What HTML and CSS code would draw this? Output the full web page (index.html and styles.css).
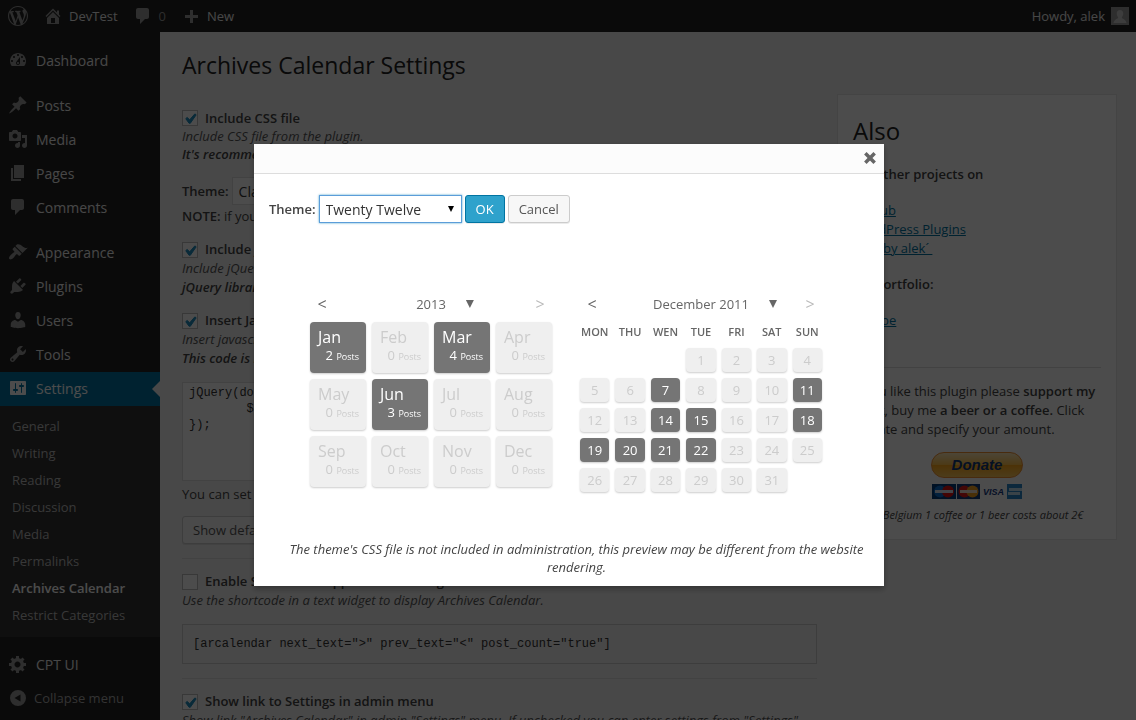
FILE: index.html
```html
<!DOCTYPE html>
<html lang="en">
<head>
<meta charset="utf-8">
<title>Archives Calendar Settings</title>
<link rel="stylesheet" href="styles.css">
</head>
<body class="modal-open">

<header class="adminbar">
  <a class="bar-item" href="#" aria-label="WordPress"><svg class="icon" viewBox="0 0 20 20"><path d="M20 10c0-5.51-4.49-10-10-10C4.48 0 0 4.49 0 10c0 5.52 4.48 10 10 10 5.51 0 10-4.48 10-10zM7.78 15.37L4.37 6.22c.55-.02 1.17-.08 1.17-.08.5-.06.44-1.13-.06-1.11 0 0-1.45.11-2.37.11-.18 0-.37 0-.58-.01C4.12 2.69 6.87 1.11 10 1.11c2.33 0 4.45.87 6.05 2.34-.68-.11-1.65.39-1.65 1.58 0 .74.45 1.36.9 2.1.35.61.55 1.36.55 2.46 0 1.49-1.4 5-1.4 5l-3.03-8.37c.54-.02.82-.17.82-.17.5-.05.44-1.25-.06-1.22 0 0-1.44.12-2.38.12-.87 0-2.33-.12-2.33-.12-.5-.03-.56 1.2-.06 1.22l.92.08 1.26 3.41zM17.41 10c.24-.64.74-1.87.43-4.25.7 1.29 1.05 2.71 1.05 4.25 0 3.29-1.73 6.24-4.4 7.78.97-2.59 1.94-5.2 2.92-7.78zM6.1 18.09C3.12 16.65 1.11 13.53 1.11 10c0-1.3.23-2.48.72-3.59C3.25 10.3 4.67 14.2 6.1 18.09zm4.03-6.63l2.58 6.98c-.86.29-1.76.45-2.71.45-.79 0-1.57-.11-2.29-.33.81-2.38 1.62-4.74 2.42-7.1z"/></svg></a>
  <a class="bar-item" href="#"><svg class="icon" viewBox="0 0 20 20"><path d="M16 8.5l1.53 1.53-1.06 1.06L10 4.6l-6.47 6.49-1.06-1.06L10 2.5l4 4v-2h2v4zm-6-2.46l6 5.99V18H4v-5.97zM12 17v-5H8v5h4z"/></svg><span>DevTest</span></a>
  <a class="bar-item bar-count" href="#"><svg class="icon" viewBox="0 0 20 20"><path d="M5 2h9c1.1 0 2 .9 2 2v7c0 1.1-.9 2-2 2h-2l-5 5v-5H5c-1.1 0-2-.9-2-2V4c0-1.1.9-2 2-2z"/></svg><span>0</span></a>
  <a class="bar-item" href="#"><svg class="icon" viewBox="0 -2 20 20"><path d="M17 7v3h-5v5H9v-5H4V7h5V2h3v5h5z"/></svg><span>New</span></a>
  <a class="bar-item bar-user" href="#"><span>Howdy, alek</span><svg class="avatar" viewBox="0 0 18 18"><rect class="avatar-bg" width="18" height="18"/><path class="avatar-fg" d="M9 3c2 0 3.300 1.500 3.300 3.500S11 10 10.800 10.500c.2 1.500 4.200 1.500 4.700 5.500h-13c.5-4 4.500-4 4.700-5.500C7 10 5.700 8.500 5.700 6.500S7 3 9 3z"/></svg></a>
</header>

<div class="layout">
  <nav class="sidebar">
    <ul class="menu">
      <li><a class="menu-link" href="#"><svg class="icon" viewBox="0 0 20 20"><path fill-rule="evenodd" d="M3.76 16h12.48c1.1-1.37 1.76-3.11 1.76-5 0-4.420-3.58-8-8-8s-8 3.580-8 8c0 1.890.66 3.630 1.760 5zM10 4c.55 0 1 .45 1 1s-.45 1-1 1-1-.45-1-1 .45-1 1-1zM6 6c.55 0 1 .45 1 1s-.45 1-1 1-1-.45-1-1 .45-1 1-1zm8 0c.55 0 1 .45 1 1s-.45 1-1 1-1-.45-1-1 .45-1 1-1zm-5.370 5.550L12 7v6c0 1.100-.9 2-2 2s-2-.9-2-2c0-.57.24-1.080.63-1.450zM4 10c.55 0 1 .45 1 1s-.45 1-1 1-1-.45-1-1 .45-1 1-1zm12 0c.55 0 1 .45 1 1s-.45 1-1 1-1-.45-1-1 .45-1 1-1zm-5 3c0-.55-.45-1-1-1s-1 .45-1 1 .45 1 1 1 1-.45 1-1z"/></svg>Dashboard</a></li>
      <li class="menu-gap"><a class="menu-link" href="#"><svg class="icon" viewBox="0 0 20 20"><path d="M10.440 3.020l1.820-1.820 6.360 6.350-1.830 1.820c-1.050-.68-2.480-.57-3.410.36l-.75.75c-.92.93-1.040 2.350-.35 3.410l-1.830 1.820-2.410-2.410-2.800 2.790c-.42.42-3.380 2.710-3.800 2.290s1.860-3.390 2.280-3.810l2.790-2.790L4.100 9.360l1.830-1.820c1.050.69 2.480.57 3.400-.36l.75-.75c.93-.92 1.050-2.350.36-3.410z"/></svg>Posts</a></li>
      <li><a class="menu-link" href="#"><svg class="icon" viewBox="0 0 20 20"><path fill-rule="evenodd" d="M13 11V4c0-.55-.45-1-1-1h-1.670L9 1H5L3.670 3H2c-.55 0-1 .45-1 1v7c0 .55.45 1 1 1h10c.55 0 1-.45 1-1zM7 4.500c1.380 0 2.500 1.120 2.500 2.500S8.380 9.500 7 9.500 4.500 8.380 4.500 7 5.620 4.500 7 4.500zM14 6h5v10.500c0 1.380-1.120 2.500-2.500 2.500S14 17.880 14 16.500s1.120-2.500 2.500-2.500c.17 0 .34.02.5.05V9h-3V6zm-4 8.050V13h2v3.500c0 1.380-1.120 2.500-2.500 2.500S7 17.880 7 16.500 8.120 14 9.500 14c.17 0 .34.02.5.05z"/></svg>Media</a></li>
      <li><a class="menu-link" href="#"><svg class="icon" viewBox="0 0 20 20"><path d="M6 15V2h10v13H6zm-1 1h8v2H3V5h2v11z"/></svg>Pages</a></li>
      <li><a class="menu-link" href="#"><svg class="icon" viewBox="0 0 20 20"><path d="M5 2h9c1.1 0 2 .9 2 2v7c0 1.1-.9 2-2 2h-2l-5 5v-5H5c-1.1 0-2-.9-2-2V4c0-1.1.9-2 2-2z"/></svg>Comments</a></li>
      <li class="menu-gap"><a class="menu-link" href="#"><svg class="icon" viewBox="0 0 20 20"><path d="M14.480 11.060L7.410 3.990l1.500-1.500c.5-.56 2.300-.47 3.510.32 1.210.8 1.430 1.280 2.910 2.100 1.180.64 2.450 1.260 4.450.85zm-.71.71L6.700 4.700 4.930 6.470c-.39.39-.39 1.020 0 1.410l1.060 1.060c.39.39.39 1.030 0 1.420-.6.6-1.430 1.110-2.210 1.690-.35.26-.7.53-1.010.84C1.430 14.230.4 16.080 1.400 17.070c.99 1 2.840-.03 4.180-1.360.31-.31.58-.66.85-1.020.57-.78 1.080-1.610 1.690-2.210.39-.39 1.020-.39 1.410 0l1.060 1.060c.39.39 1.020.39 1.410 0z"/></svg>Appearance</a></li>
      <li><a class="menu-link" href="#"><svg class="icon" viewBox="0 0 20 20"><path d="M13.110 4.360L9.870 7.600 8 5.730l3.240-3.240c.35-.34 1.050-.2 1.560.32.52.51.66 1.210.31 1.550zm-8 1.770l.91-1.120 9.010 9.010-1.190.84c-.71.71-2.630 1.160-3.820 1.160H6.140L4.900 17.260c-.59.59-1.540.59-2.120 0-.59-.58-.59-1.530 0-2.120l1.240-1.240v-3.880c0-1.130.4-3.190 1.090-3.890zm7.260 3.970l3.240-3.240c.34-.35 1.040-.21 1.550.31.52.51.66 1.210.31 1.550l-3.240 3.250z"/></svg>Plugins</a></li>
      <li><a class="menu-link" href="#"><svg class="icon" viewBox="0 0 20 20"><path d="M10 9.250c-2.270 0-2.730-3.440-2.730-3.440C7 4.020 7.820 2 9.970 2c2.160 0 2.980 2.020 2.710 3.810 0 0-.41 3.440-2.680 3.440zm0 2.570L12.720 10c2.390 0 4.520 2.330 4.520 4.530v2.490s-3.650 1.130-7.240 1.130c-3.650 0-7.240-1.130-7.240-1.130v-2.490c0-2.250 1.940-4.480 4.470-4.480z"/></svg>Users</a></li>
      <li><a class="menu-link" href="#"><svg class="icon" viewBox="0 0 20 20"><path fill-rule="evenodd" d="M16.680 9.770c-1.340 1.340-3.300 1.670-4.950.99l-5.410 6.520c-.99.99-2.590.99-3.580 0s-.99-2.590 0-3.570l6.520-5.420c-.68-1.650-.35-3.610.99-4.950 1.280-1.280 3.120-1.620 4.720-1.060l-2.890 2.890 2.820 2.820 2.860-2.870c.53 1.580.18 3.390-1.080 4.650zM3.810 16.210c.4.39 1.040.39 1.430 0 .4-.4.4-1.040 0-1.430-.39-.4-1.030-.4-1.430 0-.39.39-.39 1.030 0 1.430z"/></svg>Tools</a></li>
      <li><a class="menu-link menu-current" href="#"><svg class="icon" viewBox="0 0 20 20"><path fill-rule="evenodd" d="M18 16V4c0-.55-.45-1-1-1H3c-.55 0-1 .45-1 1v12c0 .55.45 1 1 1h14c.55 0 1-.45 1-1zM8 11h1c.55 0 1 .45 1 1s-.45 1-1 1H8v1.500c0 .28-.22.5-.5.5s-.5-.22-.5-.5V13H6c-.55 0-1-.45-1-1s.45-1 1-1h1V5.500c0-.28.22-.5.5-.5s.5.22.5.5V11zm5-2h-1c-.55 0-1-.45-1-1s.45-1 1-1h1V5.500c0-.28.22-.5.5-.5s.5.22.5.5V7h1c.55 0 1 .45 1 1s-.45 1-1 1h-1v5.500c0 .28-.22.5-.5.5s-.5-.22-.5-.5V9z"/></svg>Settings</a>
        <ul class="submenu">
          <li><a href="#">General</a></li>
          <li><a href="#">Writing</a></li>
          <li><a href="#">Reading</a></li>
          <li><a href="#">Discussion</a></li>
          <li><a href="#">Media</a></li>
          <li><a href="#">Permalinks</a></li>
          <li><a class="submenu-current" href="#">Archives Calendar</a></li>
          <li><a href="#">Restrict Categories</a></li>
        </ul>
      </li>
      <li class="menu-gap"><a class="menu-link" href="#"><svg class="icon" viewBox="0 0 20 20"><path fill-rule="evenodd" d="M18 12h-2.180c-.17.7-.44 1.350-.81 1.930l1.540 1.540-2.100 2.100-1.540-1.540c-.58.36-1.230.63-1.910.79V19H8v-2.180c-.68-.16-1.330-.43-1.910-.79l-1.540 1.540-2.120-2.120 1.540-1.540c-.36-.58-.63-1.230-.79-1.910H1V9.030h2.170c.16-.7.44-1.350.8-1.940L2.430 5.550l2.100-2.100 1.540 1.540c.58-.37 1.240-.64 1.930-.81V2h3v2.180c.68.16 1.330.43 1.910.79l1.540-1.540 2.120 2.120-1.540 1.540c.36.59.64 1.240.8 1.940H18V12zm-8.500 1.500c1.660 0 3-1.340 3-3s-1.340-3-3-3-3 1.340-3 3 1.340 3 3 3z"/></svg>CPT UI</a></li>
      <li><button class="menu-link menu-collapse" type="button"><svg class="icon" viewBox="0 0 20 20"><path fill-rule="evenodd" d="M10 2a8 8 0 1 1 0 16 8 8 0 0 1 0-16zM12.500 6.500L6.500 10l6 3.500z"/></svg>Collapse menu</button></li>
    </ul>
  </nav>

  <main class="content">
    <h1 class="page-title">Archives Calendar Settings</h1>
    <div class="columns">
      <form class="settings">
        <div class="field field-tight">
          <label class="check"><input type="checkbox" checked>Include CSS file</label>
          <p class="hint">Include CSS file from the plugin.</p>
          <p class="hint hint-strong">It's recommended to use it.</p>
        </div>
        <div class="theme-row">
          <label for="theme">Theme:</label>
          <select id="theme" class="select"><option>Classic</option></select>
        </div>
        <p class="note"><strong>NOTE:</strong> if you modify a theme, save a copy of it.</p>
        <div class="field">
          <label class="check"><input type="checkbox" checked>Include jQuery</label>
          <p class="hint">Include jQuery library into your theme.</p>
          <p class="hint hint-strong">jQuery library is required.</p>
        </div>
        <div class="field">
          <label class="check"><input type="checkbox" checked>Insert JavaScript code</label>
          <p class="hint">Insert javascript code into the page.</p>
          <p class="hint hint-strong">This code is required.</p>
        </div>
        <textarea class="code-input" aria-label="JavaScript code">jQuery(document).ready(function($){
	$('.calendar').archivesCW();
});</textarea>
        <p class="after-code">You can set your own parameters.</p>
        <button class="button show-default" type="button">Show default code</button>
        <hr class="rule">
        <div class="field">
          <label class="check"><input type="checkbox">Enable Shortcode support in text widget</label>
          <p class="hint">Use the shortcode in a text widget to display Archives Calendar.</p>
        </div>
        <pre class="shortcode">[arcalendar next_text="&gt;" prev_text="&lt;" post_count="true"]</pre>
        <hr class="rule">
        <div class="field">
          <label class="check"><input type="checkbox" checked>Show link to Settings in admin menu</label>
          <p class="hint">Show link "Archives Calendar" in admin "Settings" menu. If unchecked you can enter settings from "Settings" link in plugins page.</p>
        </div>
      </form>

      <aside class="card">
        <h2 class="card-title">Also</h2>
        <p class="card-text"><strong>My other projects on</strong></p>
        <p class="card-text"><a href="#">GitHub</a><br><a href="#">WordPress Plugins</a><br><a href="#">Blog by alek´&nbsp;</a></p>
        <p class="card-text"><strong>My portfolio:</strong></p>
        <p class="card-text"><a href="#">alek.be</a></p>
        <hr class="card-rule">
        <p class="card-text">If you like this plugin please <strong>support my work</strong>, buy me <strong>a beer or a coffee.</strong> Click Donate and specify your amount.</p>
        <div class="donate">
          <button class="donate-button" type="button">Donate</button>
          <svg class="cards" viewBox="0 0 90 15" role="img" aria-label="Accepted cards">
            <rect width="24" height="15" fill="#003a78"/><circle cx="8" cy="7.500" r="6" fill="#0a6fd0"/><circle cx="16" cy="7.500" r="6" fill="#e01010"/><path d="M3 6h18v3H3z" fill="#dce3f0"/>
            <rect x="25" width="23" height="15" fill="#123a78"/><circle cx="32.500" cy="7.500" r="6" fill="#e01818"/><circle cx="40.500" cy="7.500" r="6" fill="#f5a020"/><path d="M28 6h17v3H28z" fill="#f5e3d8"/>
            <text class="visa" x="51" y="11">VISA</text>
            <rect x="75" width="15" height="15" fill="#2a86c8"/><path d="M77 4h13v3H77zM76 8h12v3H76z" fill="#c4e0f2"/>
          </svg>
          <p class="donate-note">In Belgium 1 coffee or 1 beer costs about 2€</p>
        </div>
      </aside>
    </div>
  </main>
</div>

<div class="overlay">
  <section class="modal" role="dialog" aria-label="Theme preview">
    <div class="modal-bar">
      <button class="modal-close" type="button" aria-label="Close"><svg viewBox="0 0 12 12"><path d="M2 2l8 8M10 2l-8 8"/></svg></button>
    </div>
    <div class="modal-body">
      <div class="picker">
        <label for="preview-theme">Theme:</label>
        <select id="preview-theme" class="select select-focus"><option>Twenty Twelve</option></select>
        <button class="button button-primary" type="button">OK</button>
        <button class="button" type="button">Cancel</button>
      </div>
      <div class="calendars">
        <section class="calendar">
          <div class="cal-nav">
            <button class="cal-arrow" type="button">&lt;</button>
            <span>2013</span>
            <div class="cal-side"><button class="cal-drop" type="button" aria-label="Choose year"></button><button class="cal-arrow cal-off" type="button">&gt;</button></div>
          </div>
          <div class="months">
            <div class="month on"><span class="month-name">Jan</span><span class="month-count">2 <small>Posts</small></span></div>
            <div class="month"><span class="month-name">Feb</span><span class="month-count">0 <small>Posts</small></span></div>
            <div class="month on"><span class="month-name">Mar</span><span class="month-count">4 <small>Posts</small></span></div>
            <div class="month"><span class="month-name">Apr</span><span class="month-count">0 <small>Posts</small></span></div>
            <div class="month"><span class="month-name">May</span><span class="month-count">0 <small>Posts</small></span></div>
            <div class="month on"><span class="month-name">Jun</span><span class="month-count">3 <small>Posts</small></span></div>
            <div class="month"><span class="month-name">Jul</span><span class="month-count">0 <small>Posts</small></span></div>
            <div class="month"><span class="month-name">Aug</span><span class="month-count">0 <small>Posts</small></span></div>
            <div class="month"><span class="month-name">Sep</span><span class="month-count">0 <small>Posts</small></span></div>
            <div class="month"><span class="month-name">Oct</span><span class="month-count">0 <small>Posts</small></span></div>
            <div class="month"><span class="month-name">Nov</span><span class="month-count">0 <small>Posts</small></span></div>
            <div class="month"><span class="month-name">Dec</span><span class="month-count">0 <small>Posts</small></span></div>
          </div>
        </section>
        <section class="calendar">
          <div class="cal-nav">
            <button class="cal-arrow" type="button">&lt;</button>
            <span>December 2011</span>
            <div class="cal-side"><button class="cal-drop" type="button" aria-label="Choose month"></button><button class="cal-arrow cal-off" type="button">&gt;</button></div>
          </div>
          <table class="days">
            <thead><tr><th>MON</th><th>THU</th><th>WEN</th><th>TUE</th><th>FRI</th><th>SAT</th><th>SUN</th></tr></thead>
            <tbody>
              <tr><td class="none"></td><td class="none"></td><td class="none"></td><td>1</td><td>2</td><td>3</td><td>4</td></tr>
              <tr><td>5</td><td>6</td><td class="on">7</td><td>8</td><td>9</td><td>10</td><td class="on">11</td></tr>
              <tr><td>12</td><td>13</td><td class="on">14</td><td class="on">15</td><td>16</td><td>17</td><td class="on">18</td></tr>
              <tr><td class="on">19</td><td class="on">20</td><td class="on">21</td><td class="on">22</td><td>23</td><td>24</td><td>25</td></tr>
              <tr><td>26</td><td>27</td><td>28</td><td>29</td><td>30</td><td>31</td><td class="none"></td></tr>
            </tbody>
          </table>
        </section>
      </div>
      <p class="modal-note">The theme's CSS file is not included in administration, this preview may be different from the website rendering.</p>
    </div>
  </section>
</div>
</body>
</html>
```
FILE: styles.css
```css
* { box-sizing: border-box; }

body {
  margin: 0;
  background: #f1f1f1;
  color: #444;
  font: 13px/19px "Open Sans", sans-serif;
}
.modal-open { height: 100vh; overflow: hidden; }

h1, h2, p, ul, pre { margin: 0; padding: 0; }
ul { list-style: none; }
a { color: #0074a2; }
button, select, textarea, input { font: inherit; color: inherit; margin: 0; }
strong, label { font-weight: 600; }

.icon { width: 20px; height: 20px; fill: #999; flex: none; }

/* Admin bar */
.adminbar {
  display: flex;
  align-items: center;
  gap: 15px;
  height: 32px;
  padding: 0 7px 0 8px;
  background: #222;
}
.bar-item {
  display: flex;
  align-items: center;
  gap: 6px;
  color: #eee;
  text-decoration: none;
}
.bar-count { color: #999; }
.bar-user { margin-left: auto; }
.avatar { width: 18px; height: 18px; }
.avatar-bg { fill: #999; }
.avatar-fg { fill: #ccc; }

/* Side menu */
.layout { display: flex; }
.sidebar {
  flex: none;
  width: 160px;
  min-height: 100vh;
  padding-top: 12px;
  background: #222;
}
.menu-link {
  position: relative;
  display: flex;
  align-items: center;
  gap: 8px;
  width: 100%;
  height: 34px;
  padding: 0 8px 2px;
  border: 0;
  background: none;
  color: #eee;
  font-size: 14px;
  text-decoration: none;
}
.menu-gap { padding-top: 11px; }
.menu-current { background: #0074a2; color: #fff; }
.menu-current .icon { fill: #fff; }
.menu-current::after {
  content: "";
  position: absolute;
  right: 0;
  top: 9px;
  border: 8px solid transparent;
  border-left: 0;
  border-right-color: #f1f1f1;
}
.menu-collapse { gap: 6px; color: #aaa; font-size: 13px; }
.submenu { padding: 7px 0 8px; background: #333; }
.submenu a {
  display: block;
  padding: 0 12px;
  color: #bbb;
  line-height: 27px;
  text-decoration: none;
}
.submenu .submenu-current { color: #fff; font-weight: 600; }

/* Settings page */
.content { flex: 1; min-width: 0; padding: 19px 19px 0 22px; }
.page-title {
  color: #222;
  font-size: 23px;
  font-weight: 400;
  line-height: 29px;
}
.columns {
  display: grid;
  grid-template-columns: minmax(0, 1fr) 280px;
  gap: 20px;
  align-items: start;
  padding-top: 14px;
}
.settings { padding-top: 15px; }
.field { padding-bottom: 14px; }
.field-tight { line-height: 18px; }
.check { display: flex; align-items: center; gap: 7px; }
.check input {
  appearance: none;
  width: 16px;
  height: 16px;
  border: 1px solid #bbb;
  background: #fff;
}
.check input:checked {
  background: #fff url("data:image/svg+xml,%3Csvg xmlns='http://www.w3.org/2000/svg' viewBox='3 2 14 14'%3E%3Cpath fill='%231e8cbe' stroke='%231e8cbe' d='M14.830 4.890l1.340.94-5.810 8.380H9.020L5.780 9.670l1.340-1.250 2.570 2.400z'/%3E%3C/svg%3E") center / 14px no-repeat;
}
.hint { color: #555; font-style: italic; }
.hint-strong { color: #444; font-weight: 600; }
.theme-row { display: flex; align-items: center; gap: 3px; }
.select {
  appearance: none;
  height: 28px;
  padding: 0 24px 0 6px;
  border: 1px solid #ddd;
  background: #fff url("data:image/svg+xml,%3Csvg xmlns='http://www.w3.org/2000/svg' viewBox='0 0 6 6'%3E%3Cpath d='M0 0h6L3 6z'/%3E%3C/svg%3E") right 7px center / 6px no-repeat;
  color: #333;
  font-size: 14px;
}
.note { padding: 2px 0 14px; }
.code-input {
  display: block;
  width: 100%;
  height: 99px;
  padding: 2px 6px;
  border: 1px solid #ddd;
  background: #fff;
  color: #333;
  font: 12px/16px "Liberation Mono", monospace;
  resize: none;
}
.after-code { padding: 4px 0 12px; }
.button {
  height: 28px;
  padding: 0 10px;
  border: 1px solid #ccc;
  border-radius: 3px;
  background: #f7f7f7;
  box-shadow: 0 1px 0 rgba(0, 0, 0, .08);
  color: #555;
}
.button-primary { border-color: #0074a2; background: #2ea2cc; color: #fff; }
.show-default { display: block; }
.rule { height: 1px; margin: 14px 0 13px; border: 0; background: #ddd; }
.shortcode {
  padding: 10px;
  border: 1px solid #ccc;
  color: #333;
  font: 12px/18px "Liberation Mono", monospace;
}

/* Side card */
.card {
  padding: 15px;
  border: 1px solid #e5e5e5;
  background: #fff;
}
.card-title {
  padding: 6px 0 12px;
  color: #222;
  font-size: 24px;
  font-weight: 400;
  line-height: 29px;
}
.card-text { padding: 8px 0 9px; }
.card-rule { height: 1px; margin: 28px 0 6px; border: 0; background: #ddd; }
.donate {
  display: flex;
  flex-direction: column;
  align-items: center;
  gap: 6px;
  padding-top: 4px;
}
.donate-button {
  width: 92px;
  height: 26px;
  padding: 0;
  border: 1px solid #f09030;
  border-radius: 13px;
  background: linear-gradient(#ffe8b8, #ffc04a 50%, #ffa91a 52%, #ffc95c);
  color: #113a78;
  font: italic bold 15px/22px "Liberation Sans", sans-serif;
}
.cards { width: 90px; height: 15px; }
.visa { fill: #14387f; font: italic bold 9px "Liberation Sans", sans-serif; }
.donate-note { font-size: 11px; font-style: italic; white-space: nowrap; }

/* Preview window */
.overlay {
  position: fixed;
  inset: 0;
  display: flex;
  align-items: center;
  justify-content: center;
  padding: 10px 0 0 2px;
  background: rgba(0, 0, 0, .7);
}
.modal {
  width: 630px;
  max-width: 100%;
  background: #fff;
  box-shadow: 0 3px 6px rgba(0, 0, 0, .3);
}
.modal-bar {
  display: flex;
  justify-content: flex-end;
  align-items: center;
  height: 30px;
  padding: 0 7px 2px;
  border-bottom: 1px solid #ddd;
  background: #fcfcfc;
}
.modal-close {
  display: flex;
  padding: 0;
  border: 0;
  background: none;
}
.modal-close svg {
  width: 14px;
  height: 14px;
  fill: none;
  stroke: #666;
  stroke-width: 3;
}
.modal-body { padding: 21px 15px 10px; }
.picker { display: flex; align-items: center; gap: 3px; }
.select-focus {
  width: 143px;
  border-color: #5b9dd9;
  box-shadow: 0 0 2px rgba(30, 140, 190, .8);
}
.calendars {
  display: flex;
  justify-content: center;
  gap: 28px;
  min-height: 317px;
  padding: 69px 6px 0 0;
}
.calendar { width: 242px; }
.cal-nav {
  display: grid;
  grid-template-columns: 1fr auto 1fr;
  align-items: center;
  height: 24px;
  margin-bottom: 6px;
  color: #666;
}
.cal-arrow {
  justify-self: start;
  width: 24px;
  padding: 0;
  border: 0;
  background: none;
  font-size: 16px;
}
.cal-off { color: #bbb; }
.cal-side {
  display: flex;
  align-items: center;
  justify-content: space-between;
  padding-left: 20px;
}
.cal-drop {
  width: 8px;
  height: 8px;
  padding: 0;
  border: 0;
  background: #666;
  clip-path: polygon(0 0, 100% 0, 50% 100%);
}
.months {
  display: grid;
  grid-template-columns: repeat(4, 1fr);
  gap: 6px;
}
.month {
  display: flex;
  flex-direction: column;
  height: 51px;
  padding: 5px 7px 0 8px;
  border-radius: 4px;
  background: #efefef;
  box-shadow: 0 1px 2px rgba(0, 0, 0, .2);
  color: #ccc;
}
.month-name { font-size: 16px; line-height: 20px; }
.month-count { font-size: 13px; line-height: 17px; text-align: right; }
.month-count small { font-size: 9px; }
.month.on, .days .on { background: #757575; color: #fff; }
.days {
  width: 254px;
  margin: -6px;
  border-spacing: 6px;
  table-layout: fixed;
}
.days th {
  height: 20px;
  padding: 0;
  color: #666;
  font-size: 11px;
  font-weight: 600;
  line-height: 20px;
}
.days td {
  height: 24px;
  padding: 0;
  border-radius: 4px;
  background: #efefef;
  box-shadow: 0 1px 2px rgba(0, 0, 0, .2);
  color: #ccc;
  line-height: 24px;
  text-align: center;
}
.days .none { background: none; box-shadow: none; }
.modal-note {
  padding-left: 15px;
  font-style: italic;
  line-height: 18px;
  text-align: center;
}
```
